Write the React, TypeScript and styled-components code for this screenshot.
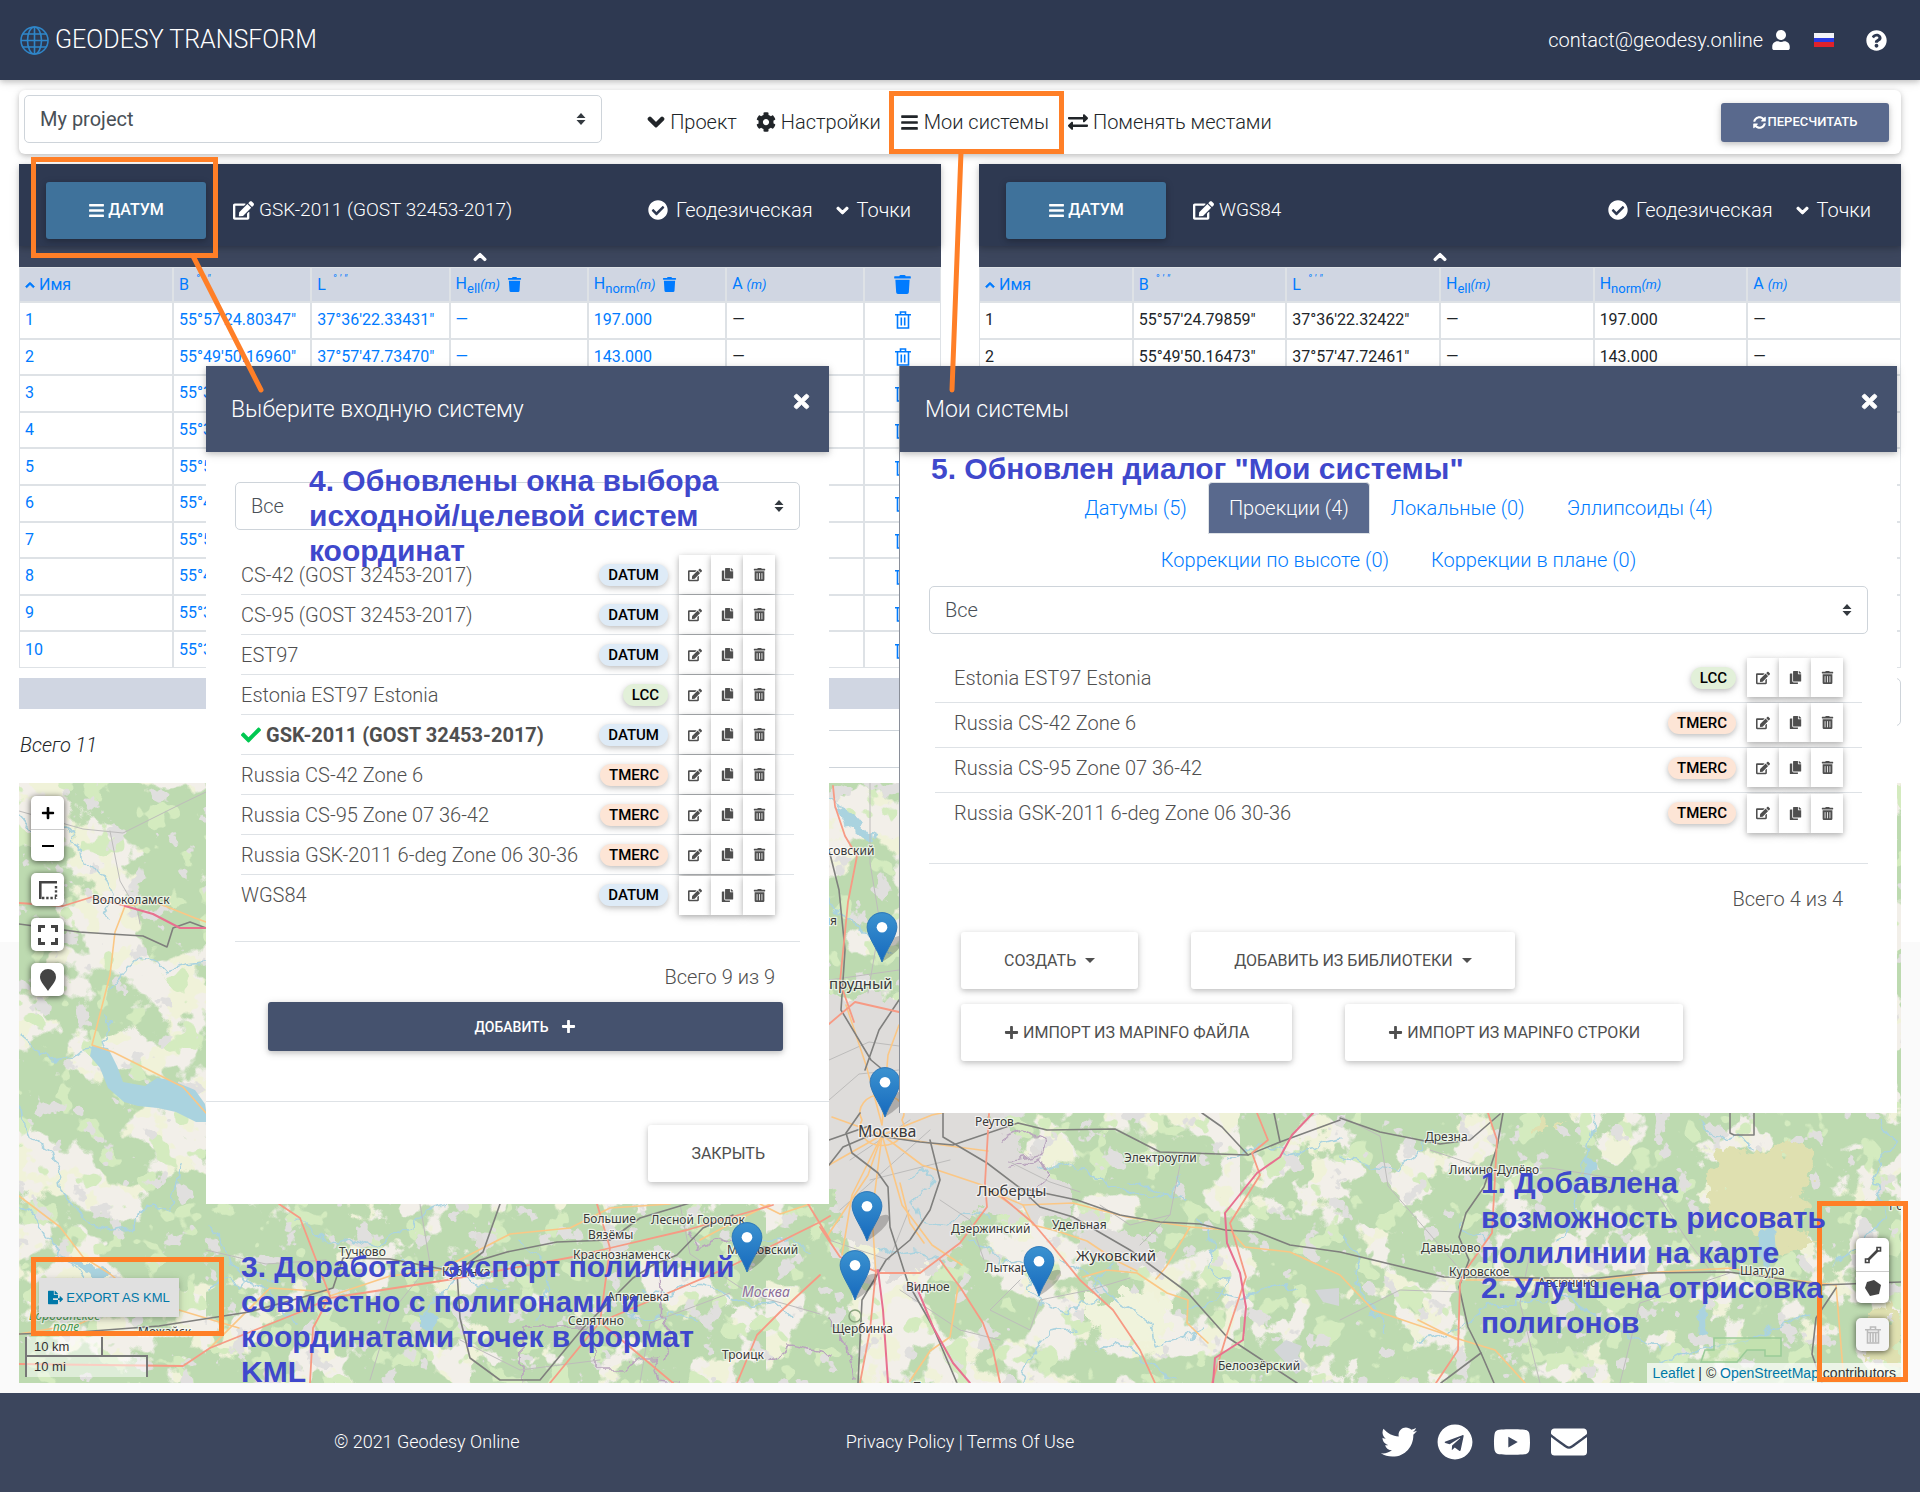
import React from "react";
import styled, { createGlobalStyle, css } from "styled-components";
import {
  FaBars,
  FaCheck,
  FaCheckCircle,
  FaChevronDown,
  FaCog,
  FaCopy,
  FaEdit,
  FaEnvelope,
  FaExchangeAlt,
  FaFileExport,
  FaPlus,
  FaQuestionCircle,
  FaSyncAlt,
  FaTelegram,
  FaTimes,
  FaTrash,
  FaTrashAlt,
  FaTwitter,
  FaUser,
  FaYoutube,
} from "react-icons/fa";

const color = {
  navy: "#2e3951",
  slate: "#3c465d",
  modal: "#45526e",
  accent: "#59698d",
  datum: "#3f729b",
  link: "#007bff",
  tableHead: "#d0d6e2",
  line: "#dee2e6",
  note: "#3f48cc",
  frame: "#ff7f27",
};

const shadow = "0 2px 5px rgba(0, 0, 0, 0.16), 0 2px 10px rgba(0, 0, 0, 0.12)";

const GlobalStyle = createGlobalStyle`
  * { box-sizing: border-box; }
  body {
    margin: 0;
    background: #fff;
    color: #212529;
    font: 400 20px/30px Roboto, "Open Sans", sans-serif;
  }
  button, input, select { font: inherit; color: inherit; }
  button { cursor: pointer; border: 0; padding: 0; background: none; }
  svg { flex: none; display: block; }
  a { text-decoration: none; color: inherit; }
  h1, h2, p, ul { margin: 0; padding: 0; font-weight: inherit; }
`;

const Page = styled.div`
  position: relative;
  background: linear-gradient(#fff 942px, #fafafa 942px);
`;

/* ---------- Top bar ---------- */

const TopBar = styled.header`
  display: flex;
  align-items: center;
  justify-content: space-between;
  height: 80px;
  padding: 0 33px 0 20px;
  background: ${color.navy};
  color: #fff;
  font-weight: 300;
  box-shadow: ${shadow};
`;

const Brand = styled.a`
  display: flex;
  align-items: center;
  gap: 6px;

  h1 {
    font-size: 25px;
  }
`;

const Account = styled.nav`
  display: flex;
  align-items: center;

  a {
    display: flex;
    align-items: center;
    gap: 8px;
  }
  button {
    display: flex;
    margin-left: 23px;
  }
  button:last-child {
    margin-left: 32px;
  }
`;

const Flag = styled.span`
  width: 20px;
  height: 14px;
  background: linear-gradient(#f4f4f8 33%, #2b3be0 33% 62%, #e0222a 62%);
`;

const Main = styled.main`
  padding: 10px 19px;
`;

/* ---------- Toolbar ---------- */

const Toolbar = styled.section`
  display: flex;
  align-items: center;
  height: 64px;
  padding: 0 12px 0 5px;
  border-radius: 6px;
  background: #fff;
  box-shadow: ${shadow};
`;

const SelectBox = styled.label`
  display: grid;
  align-items: center;
  width: 100%;
  height: 48px;

  select,
  svg {
    grid-area: 1 / 1;
  }
  select {
    appearance: none;
    width: 100%;
    height: 100%;
    padding: 0 36px 0 15px;
    border: 1px solid #ced4da;
    border-radius: 5px;
    background: #fff;
    color: #495057;
  }
  svg {
    justify-self: end;
    margin-right: 16px;
    pointer-events: none;
  }
`;

const ToolbarSelect = styled.div`
  align-self: flex-start;
  width: 31%;
  padding-top: 5px;
`;

const Menu = styled.nav`
  display: flex;
  flex: 1;
  gap: 19px;
  margin-left: 45px;

  button {
    display: flex;
    align-items: center;
    gap: 5px;
    font-weight: 300;
  }
`;

const RecalcButton = styled.button`
  display: flex;
  align-items: center;
  justify-content: center;
  gap: 2px;
  width: 168px;
  height: 39px;
  border-radius: 3px;
  background: ${color.accent};
  color: #fff;
  font-size: 13px;
  font-weight: 500;
  box-shadow: ${shadow};
`;

/* ---------- Coordinate panels ---------- */

const Panels = styled.div`
  display: grid;
  grid-template-columns: 1fr 1fr;
  gap: 38px;
  margin-top: 10px;
`;

const Panel = styled.section`
  display: flex;
  flex-direction: column;
`;

const PanelHead = styled.header`
  position: relative;
  display: flex;
  align-items: center;
  height: 82px;
  padding: 10px 30px 0 27px;
  background: ${color.navy};
  color: #fff;
  box-shadow: ${shadow};
`;

const DatumButton = styled.button`
  display: flex;
  align-items: center;
  justify-content: center;
  gap: 3px;
  width: 160px;
  height: 57px;
  border-radius: 3px;
  background: ${color.datum};
  color: #fff;
  font-size: 16px;
  font-weight: 500;
  box-shadow: ${shadow};
`;

const SystemName = styled.button`
  display: flex;
  flex: 1;
  align-items: center;
  gap: 5px;
  margin-left: 27px;
  color: #fff;
  font-size: 19px;
  font-weight: 300;
`;

const ModeButton = styled.button`
  display: flex;
  align-items: center;
  gap: 8px;
  margin-left: 23px;
  color: #fff;
  font-weight: 300;
`;

const Collapse = styled.button`
  display: flex;
  align-items: center;
  justify-content: center;
  height: 21px;
  background: ${color.slate};
  color: #fff;
`;

const Chevron = styled(FaChevronDown)<{ $up?: boolean }>`
  stroke: currentColor;
  stroke-width: 44;
  ${(p) => p.$up && "transform: rotate(180deg);"}
`;

const Table = styled.table<{ $input?: boolean }>`
  width: 100%;
  height: 401px;
  border-collapse: separate;
  border-spacing: 0;
  table-layout: fixed;
  font-size: 16px;
  line-height: 24px;
  background: #fff;
  color: ${(p) => (p.$input ? color.link : "#212529")};

  th,
  td {
    overflow: hidden;
    padding: 0 5px;
    border: 1px solid ${color.line};
    text-align: left;
    font-weight: 400;
    white-space: nowrap;
  }
  th {
    height: 35px;
    background: ${color.tableHead};
    color: ${color.link};
  }
  td.plain {
    color: #212529;
  }
  .bin svg {
    margin: 0 auto;
  }
  i {
    font-size: 13px;
  }
  sub {
    font-size: 13px;
    line-height: 0;
  }
`;

const HeadCell = styled.span`
  display: flex;
  align-items: center;
  gap: 4px;

  span + svg {
    margin-left: 3px;
  }
`;

const Degrees = styled.sup`
  align-self: flex-start;
  font-size: 11px;
  font-style: italic;
  line-height: 12px;
  white-space: pre;
`;

const Strip = styled.div`
  height: 31px;
  margin-top: 10px;
  background: ${color.tableHead};
`;

const PageSizeRow = styled.div`
  margin-top: 10px;
`;

const Summary = styled.div`
  display: grid;
  grid-template-columns: 1fr 1fr;
  align-items: start;
  margin-top: 21px;
  font-style: italic;
  font-weight: 300;

  span {
    padding-left: 1px;
  }
  input {
    width: 100%;
    height: 38px;
    border: 1px solid #ced4da;
    border-radius: 4px;
  }
`;

/* ---------- Map ---------- */

const MapBox = styled.section`
  position: relative;
  height: 600px;
  margin-top: 15px;
  overflow: hidden;
  background: #f2efe9;
  font: 14px/20px "Liberation Sans", sans-serif;

  > svg {
    width: 100%;
    height: 100%;
  }
`;

const ControlStack = styled.div<{ $side: "left" | "right" }>`
  position: absolute;
  display: flex;
  flex-direction: column;
  gap: ${(p) => (p.$side === "left" ? 12 : 15)}px;
  ${(p) =>
    p.$side === "left"
      ? css`
          top: 13px;
          left: 12px;
        `
      : css`
          right: 12px;
          bottom: 32px;
        `}
`;

const ControlBar = styled.div<{ $muted?: boolean }>`
  overflow: hidden;
  width: 33px;
  border-radius: 5px;
  background: ${(p) => (p.$muted ? "#f4f4f4" : "#fff")};
  color: ${(p) => (p.$muted ? "#bbb" : "#444")};
  box-shadow: 0 1px 6px rgba(0, 0, 0, 0.65);

  button {
    display: flex;
    align-items: center;
    justify-content: center;
    width: 33px;
    height: 33px;
  }
  button + button {
    height: 32px;
    border-top: 1px solid #ccc;
  }
`;

const ExportButton = styled.button`
  position: absolute;
  left: 20px;
  bottom: 66px;
  display: flex;
  align-items: center;
  justify-content: center;
  gap: 3px;
  width: 140px;
  height: 39px;
  background: #e0e0e0;
  color: #0078a8;
  font-size: 13px;
  box-shadow: ${shadow};
`;

const Scale = styled.div`
  position: absolute;
  left: 6px;
  bottom: 6px;
  color: #333;
  font-size: 13px;
  line-height: 20px;

  div {
    height: 20px;
    padding-left: 7px;
    border: 2px solid #777;
    border-top: 0;
    background: rgba(255, 255, 255, 0.5);
  }
  div:first-child {
    width: 78px;
  }
  div:last-child {
    width: 123px;
    height: 22px;
    margin-top: -2px;
    border-top: 2px solid #777;
    border-bottom: 0;
  }
`;

const Attribution = styled.div`
  position: absolute;
  right: 0;
  bottom: 0;
  padding: 0 5px;
  background: rgba(255, 255, 255, 0.7);
  color: #333;

  a {
    color: #0078a8;
  }
`;

/* ---------- Dialogs ---------- */

const Dialog = styled.section<{ $left: number; $width: number; $edge?: boolean }>`
  position: absolute;
  top: 366px;
  left: ${(p) => p.$left}px;
  width: ${(p) => p.$width}px;
  ${(p) => p.$edge && "border-left: 1px solid #8a8f99;"}
  background: #fff;
  color: #4f4f4f;
  font-weight: 300;
`;

const DialogHead = styled.header`
  display: flex;
  justify-content: space-between;
  height: 86px;
  padding: 0 17px 0 25px;
  background: ${color.modal};
  color: #fff;
  box-shadow: ${shadow};

  h2 {
    font-size: 23px;
    line-height: 88px;
  }
  button {
    height: 70px;
  }
`;

const CloseIcon = styled(FaTimes)`
  stroke: currentColor;
  stroke-width: 24;
`;

const DialogBody = styled.div`
  padding: 30px 29px 0;
`;

const SystemList = styled.ul<{ $roomy?: boolean }>`
  margin: ${(p) => (p.$roomy ? "24px 6px 25px" : "25px 6px 26px")};
  list-style: none;

  li {
    display: flex;
    align-items: center;
    height: ${(p) => (p.$roomy ? 45 : 40)}px;
    padding: ${(p) => (p.$roomy ? "0 19px 5px" : "0 19px 0 0")};
    border-bottom: 1px solid ${color.line};
  }
  li:last-child {
    border-bottom: 0;
  }
`;

const SystemTitle = styled.span<{ $chosen?: boolean }>`
  display: flex;
  flex: 1;
  align-items: center;
  gap: 5px;
  font-weight: ${(p) => (p.$chosen ? 700 : 300)};

  svg {
    color: #00c851;
  }
`;

const kinds = { DATUM: "#deebf7", LCC: "#e2f0d9", TMERC: "#fde5d6" };
type Kind = keyof typeof kinds;

const Badge = styled.span<{ $kind: Kind }>`
  height: 22px;
  margin-right: 11px;
  padding: 0 9px;
  border-radius: 11px;
  background: ${(p) => kinds[p.$kind]};
  color: #000;
  font-size: 15px;
  font-weight: 500;
  line-height: 22px;
  box-shadow: ${shadow};
`;

const RowButton = styled.button`
  display: flex;
  align-items: center;
  justify-content: center;
  width: 32px;
  height: 39px;
  background: #fff;
  color: #4f4f4f;
  box-shadow: 0 2px 5px rgba(0, 0, 0, 0.2), 0 2px 10px rgba(0, 0, 0, 0.16);
`;

const Total = styled.p`
  padding: 20px 25px 0;
  border-top: 1px solid ${color.line};
  text-align: right;
`;

const AddButton = styled.button`
  display: flex;
  align-items: center;
  justify-content: center;
  gap: 13px;
  width: calc(100% - 50px);
  height: 49px;
  margin: 10px 17px 50px 33px;
  border-radius: 3px;
  background: ${color.modal};
  color: #fff;
  font-size: 14px;
  font-weight: 500;
  box-shadow: ${shadow};
`;

const LightButton = styled.button`
  display: flex;
  align-items: center;
  gap: 4px;
  height: 57px;
  padding: 0 43px;
  border-radius: 3px;
  background: #fff;
  color: #4f4f4f;
  font-size: 16px;
  font-weight: 400;
  box-shadow: ${shadow};
`;

const DialogFoot = styled.footer`
  display: flex;
  justify-content: flex-end;
  padding: 23px 21px 22px;
  border-top: 1px solid ${color.line};
`;

const Tabs = styled.nav`
  display: flex;
  flex-wrap: wrap;
  justify-content: center;
  padding: 0 130px;
`;

const Tab = styled.button<{ $active?: boolean }>`
  height: 52px;
  padding: 0 20px;
  border: 1px solid ${(p) => (p.$active ? color.line : "transparent")};
  border-radius: 4px 4px 0 0;
  background: ${(p) => (p.$active ? color.accent : "transparent")};
  color: ${(p) => (p.$active ? "#fff" : color.link)};
  font-weight: 300;
`;

const Actions = styled.div`
  display: flex;
  flex-wrap: wrap;
  gap: 15px 53px;
  padding: 18px 32px 52px;
`;

const Caret = styled.span`
  margin-left: 5px;
  border: 5px solid transparent;
  border-top-color: currentColor;
  border-bottom: 0;
`;

/* ---------- Footer ---------- */

const Footer = styled.footer`
  display: grid;
  grid-template-columns: 1fr 1fr 1fr;
  align-items: center;
  justify-items: center;
  height: 99px;
  padding: 0 160px 2px;
  background: ${color.slate};
  color: #fff;
  font-size: 18px;
  font-weight: 300;
`;

const Social = styled.div`
  display: flex;
  align-items: center;
  gap: 20px;
  padding-right: 18px;
`;

/* ---------- Annotations ---------- */

const Frame = styled.div<{ $x: number; $y: number; $w: number; $h: number }>`
  position: absolute;
  top: ${(p) => p.$y}px;
  left: ${(p) => p.$x}px;
  width: ${(p) => p.$w}px;
  height: ${(p) => p.$h}px;
  border: 5px solid ${color.frame};
  pointer-events: none;
`;

const Pointers = styled.svg`
  position: absolute;
  top: 0;
  left: 0;
  pointer-events: none;
`;

const Note = styled.p<{ $x: number; $y: number }>`
  position: absolute;
  top: ${(p) => p.$y}px;
  left: ${(p) => p.$x}px;
  color: ${color.note};
  font: 700 30px/35px "Liberation Sans", Arial, sans-serif;
  white-space: pre;
  pointer-events: none;
`;

/* ---------- Drawings ---------- */

const Globe = () => (
  <svg width="29" height="29" viewBox="0 0 29 29" fill="none" stroke="#2f86c9" strokeWidth="1.6">
    <circle cx="14.5" cy="14.5" r="13.5" />
    <ellipse cx="14.5" cy="14.5" rx="7" ry="13.5" />
    <path d="M14.5 1v27M1 14.5h27M3 8h23M3 21h23" />
  </svg>
);

const SortCaret = () => (
  <svg width="10" height="12" viewBox="0 0 10 12" fill="#343a40">
    <path d="M5 0l4.5 5h-9zM5 12l4.5-5h-9z" />
  </svg>
);

const RulerIcon = () => (
  <svg width="20" height="20" viewBox="0 0 20 20" fill="none" stroke="currentColor" strokeWidth="2.6">
    <path d="M2.3 19V2.3H19" />
    <path d="M18 6v13M4 18h14" strokeDasharray="2.4 1.8" strokeWidth="2.4" />
  </svg>
);

const FullscreenIcon = () => (
  <svg width="22" height="22" viewBox="0 0 22 22" fill="none" stroke="currentColor" strokeWidth="3">
    <path d="M2.5 8V2.5H8M14 2.5h5.5V8M19.5 14v5.5H14M8 19.5H2.5V14" />
  </svg>
);

const PinIcon = () => (
  <svg width="18" height="22" viewBox="0 0 18 22" fill="currentColor">
    <path d="M9 0a8 8 0 0 0-8 8c0 5 5 9 8 14 3-5 8-9 8-14a8 8 0 0 0-8-8z" />
  </svg>
);

const LineIcon = () => (
  <svg width="18" height="18" viewBox="0 0 18 18" fill="none" stroke="currentColor">
    <path d="M4 14L14 4" strokeWidth="2.6" />
    <path d="M1.5 13H5v3.5H1.5zM13 1.5h3.5V5H13z" strokeWidth="1.6" />
  </svg>
);

const PolygonIcon = () => (
  <svg width="16" height="16" viewBox="0 0 16 16" fill="currentColor">
    <path d="M9 0l7 5-2 9-9 2-5-8 2-6z" />
  </svg>
);

const BinIcon = ({ striped }: { striped?: boolean }) => (
  <svg width="16" height="18" viewBox="0 0 16 18" fill="none" stroke="currentColor" strokeWidth="1.6">
    <path d="M0 3.8h16M5.5 3.500V1h5v2.500M2.500 4v13h11V4" />
    <path d={striped ? "M2.500 6.500h11M5.300 6v10.500M8 6v10.500M10.700 6v10.500" : "M6.300 6.500v8M9.700 6.500v8"} />
  </svg>
);

/* Map geometry is written in the coordinates of the 1882 × 600 view that starts at 19, 783. */

const rivers = [
  "M19 815l10 12 6 14 12-4 6 10M63 826l10 6-4 10 12 8 2 14 14 6 10 12 4 16-8 10 6 12",
  "M19 1033l12 10 8 12 14 5 14-2 10-8 13-2 17 6",
  "M110 990l14-18 14-16 16 2 10 12 20-6 22-2M107 1052l-4-14 10-8-8-14",
  "M19 1099l4 20 7 19 23 15 5 18 2 18 18 22 12 13 18 6 22-3 13-19 12-2 15 6 4-20 6-31",
  "M19 1206l16 10 12 20 14 20 16 14 14 22 30 18",
  "M206 1226l14 12 10 24 16 18 20 8 12 20 18 14M206 1290l20-10 16 8 14-14 20 6",
  "M300 1218l14 14 22 12 20-6 24 8 14-14 20-6 14-16 20-6M400 1262l24 10 30-6 24 20 30 4",
  "M420 1320l14-20 12-8 10-20 30 6 16-16 24 4",
  "M640 1290l30 6 20-14 30 8 26 16 28-4 20 18M620 1310l30 10 18-8 30 8",
  "M829 900l10 16 20 8 14 20 20 8M829 800l14 8 8 16 26 14",
  "M910 1180l14-10 8 14-20 16 10 22 24 4 14-12 30 2M880 1245l14 10 20-4 30 10",
  "M970 1240l20 8 12 18 18-6 14 14-6 16 20 16 20 8 14-10 18-4-8-18 24-20",
  "M1040 1170l26-6 20 6 26 16 24 10 30-2 20 6M1060 1260l30 14 18 20 24 16 20 14 4 22 20-6 28-12",
  "M1200 1220l14 26-6 22 20 14-12 20-30 6M1130 1180l40 16 10-20",
  "M1100 1350l20-8 26 20 30 20M1020 1383l12-30 18-20 28-4",
  "M1215 1290l30 8 30-14 20 6M1230 1160l30-16 30 10 50-14",
  "M1340 1156l30 10 26 4 24-18 12-22M1340 1235l20 20-6 24 18 30 14 24",
  "M1460 1225l26 16 10-20 30-8M1596 1114l-8 36-16 40 8 22-20 30M1420 1340l40-10 26-24 60-6",
  "M1660 1363l40-14 44-4 30-18 34-12M1880 1120l14 22-20 36 12 40-30 32-22 12M1560 1290l40 30 60 30",
  "M1700 1120l18 20 20-6 16 18M520 1240l20 20 10 30-14 30M740 1230l20 12 30-4 20 16",
];

const reservoir =
  "M92 1046l16 2 9 18 6 16 22 4 12-8 14 2 24 10 10 14 3 18-12 0-20-10-18-4-20-2-14-4-16-14-8-20-10-12z";

const lakes = [
  "M1760 1230l14-4 2 28-8 10-12-8z",
  "M1698 1308l8-6 2 30-8 2zM1586 1156l8 4-4 20-8-4z",
  "M835 806l20 10 18 24-10-2-20-16z",
  "M418 1312l18 6-4 14-14-6z",
  "M60 1252l30 12 20 8-6 8-30-14z",
];

const minorRoads = [
  "M19 811l64 18 40 4 60-30 23-11M110 831l10 50 18 31 2 12",
  "M829 1060l40-18 30 4M829 1100l30-26 40-4M829 980l70-10M870 783v80l10 60-12 70",
  "M1340 1116l40 20 8 50 40 46 34 40M1340 1320l60-30 60 2M1430 1150l60 20 60-2 100 16 40 60 20 26",
  "M1020 1280l-30 30 40 20 10-30 50-10 40-12M1080 1192l-30-10-40-20M1180 1165l-10 50-30 30",
  "M1100 1205l30 20 40-10M940 1200l30 20 14 40M900 1290l60 40 40 10M1540 1383l-20-80 10-50",
  "M206 1250l60 14 60-4M420 1204l10 60-40 50-20 66M460 1340l60 30 80-10M1620 1383l20-80 90-30",
  "M680 1204l10 50 60 40 70 20M640 1383l10-60 80-30",
  "M829 1240l60 20 20-50M850 1160l60-40M870 1180l80-20M840 1210l90-80",
];

const orangeRoads = [
  "M125 906l-10 26-5 43-18 70 21 7 40 20 30 15 23 26",
  "M125 906l30-4 40 16 11 4",
  "M19 1196l41 31 23 30 27 17 20 16 24 14M19 1334l60-10 60-26 100 30",
  "M330 1296l60-20 50-6 70-36 60-6 40-20 60-4M210 1348l60-60 60 4",
  "M760 1204l20 10 30-10M700 1240l30-16 40-20",
  "M882 1135l-53 30M882 1135l-30 60-10 60M882 1135l-10 80 4 60M882 1135l20 70 30 40 30 20M882 1135l40 30 60 20 30 20",
  "M882 1135l60 10 46 6M882 1135l50-20 57-12M882 1135l-50-18M882 1135l-14 40-40 60M882 1125l-16-60-20-60M882 1125l6-70 11-30",
  "M862 1120a22 18 0 1 0 40 0a22 18 0 1 0-40 0",
  "M988 1190l35 15 50-2 54 14 63 10 40 3 15 17 45 5 50 23 33 35 89 30 33 10 30 33",
  "M1023 1205l10 20 24 6 30 10 30 20 20 10",
  "M1083 1277l24-7 30 3 30 20 21 7-1 23 21 20M1190 1227l-24 40-10 12",
  "M900 1183l10 40 14 20M958 1287l-8 50-20 14-20 30",
  "M1466 1280h133l60-8 73-4 41 10 63 7 7 85M1458 1340l-40-20",
];

const redRoads = [
  "M19 903l44 3 29-9 33 9",
  "M19 1364l164 2 27-18 90-36 30-14 117-18 126-23 37-9 77-18 86-25",
  "M279 1204l21 14 30 78-17 32-3 55M597 1204l13 44-10 74-50 61M600 1322l73 61M600 1322l127-54 93-46 10-6",
  "M808 1204l22 36M820 1275l-40 37-23 23-20 48",
  "M833 786l2 20 10 30 12 20-9 46-8 80 14 40M829 1024l26-22 44 10",
  "M820 1227l20 30 40 16h40l40-30 27-36-2-24 4-69",
  "M940 1260l20 27 23 36 10 27 7 33",
  "M1002 1197l31 26 17 20 30 37 33 30 27 40 15 33",
  "M1257 1113l11 27-16 13 8 22-30 48 16 54-20 60-14 46",
  "M1488 1113l9 27-2 37-3 56-24 34-8 16-2 67-22 33",
  "M876 1270l-6 60-10 53",
];

const pinkRoads = [
  "M125 906l28 8 27 14h26",
  "M1313 1113l-21 22-12 22-23 16-32 40 2 30 13 30 6 34-3 33-28 18-2 25",
  "M878 1270l5 40 5 73M915 1283l18 44 20 36 17 20",
];

const rails = [
  "M19 924l60 8 31 2 33 2 24 11 6-19 17-6 16 6",
  "M19 1334l60-2 80-6 90-14 51-14 33-10 10-30 47 1 57 11 60-18 50-10 53-2 30-22 50-15",
  "M500 1204l-17 48-26 20 3 46 10 40 30 22h40l43-52 50-50 20-13 24-10 26-27 30-13",
  "M829 850l10 40 6 60-4 60 30 50 24 20M899 1000l-20 30-14 40M829 1140l40-14",
  "M829 1165l14-18 28-12 49 7 33 3 65-22 29 7 68-1 45 23 88 3 32-13 60-22",
  "M860 1113l-14 20 6 20 26 20 10 14 2 40 18 56 25 44 24 56",
  "M943 1113v24l44 26 33 25 20 19 33 10 57 33 57 42 40 45 70 46",
  "M930 1140l10 40-10 30-20 30-24 20-24 40-4 83",
  "M1020 1188l57 12 43 15 40 7 40 2 25 6 32 2 33 13 50 7 104 25 96 1h59l48-5 81-1 41 5 52 8 80-3",
  "M1503 1113l-6 34-13 40-18 26-7 24 10 23-10 27 9 40 13 26 13 30M1340 1118l40 14 60 12 30-4 30-26",
  "M1481 1353l-40 30M1202 1113l20 14 26 28M1274 1113l6 29",
  "M1730 1113v20l4 2h20v-22M1836 1288l-20 30-4 36 10 29",
];

const borders = [
  "M522 1383v-56h60l10-2M594 1350v20h30l10-10h20l6 20 20 3M658 1260l4 60 8 20-6 20",
  "M1000 1140l20-10 24 10-6 16-30 6M1010 1170l30-10 10 16-24 20M829 1320l16 20 10 40",
  "M687 1230l10 20 20-10 20 6M770 1360l20-14 40 8",
];

const labels: [string, number, number, number?][] = [
  ["Волоколамск", 92, 904],
  ["Реутов", 975, 1126],
  ["Москва", 858, 1137, 16],
  ["Электроугли", 1124, 1162],
  ["Люберцы", 977, 1196, 15],
  ["Дзержинский", 951, 1233],
  ["Удельная", 1052, 1229],
  ["Жуковский", 1076, 1261, 15],
  ["Лыткарино", 985, 1272],
  ["Видное", 906, 1291],
  ["Щербинка", 832, 1333],
  ["Домодедово", 911, 1392, 15],
  ["Белоозёрский", 1218, 1370],
  ["Дрезна", 1425, 1141],
  ["Ликино-Дулёво", 1449, 1174],
  ["Давыдово", 1421, 1252],
  ["Куровское", 1449, 1276],
  ["Авсюнино", 1538, 1287],
  ["Шатура", 1740, 1275],
  ["Рошаль", 1889, 1210],
  ["Тучково", 339, 1256],
  ["Кубинка", 442, 1276],
  ["Большие", 583, 1223],
  ["Вязёмы", 588, 1239],
  ["Лесной Городок", 651, 1224],
  ["Краснознаменск", 573, 1259],
  ["Московский", 727, 1254],
  ["Апрелевка", 607, 1301],
  ["Селятино", 568, 1325],
  ["Троицк", 722, 1359],
  ["Можайск", 138, 1336],
  ["Лосовский", 812, 855],
  ["Долгопрудный", 785, 989, 15],
  ["Лобня", 800, 925],
];

const markers = [
  [882, 962],
  [885, 1117],
  [867, 1241],
  [747, 1272],
  [855, 1300],
  [1039, 1296],
];

const Roads = ({ paths, stroke, width }: { paths: string[]; stroke: string; width: number }) => (
  <g fill="none" stroke={stroke} strokeWidth={width} strokeLinejoin="round" strokeLinecap="round">
    {paths.map((d) => (
      <path key={d} d={d} />
    ))}
  </g>
);

const MapView = () => (
  <svg viewBox="19 783 1882 600" preserveAspectRatio="xMidYMid slice" role="img" aria-label="Карта">
    <defs>
      <filter id="forest" x="0" y="0" width="1" height="1" colorInterpolationFilters="sRGB">
        <feTurbulence type="fractalNoise" baseFrequency="0.014" numOctaves="5" seed="11" />
        <feColorMatrix values="0 0 0 0 .741  0 0 0 0 .855  0 0 0 0 .69  28 0 0 0 -12.9" />
      </filter>
      <filter id="woods" x="0" y="0" width="1" height="1" colorInterpolationFilters="sRGB">
        <feTurbulence type="fractalNoise" baseFrequency="0.02" numOctaves="5" seed="51" />
        <feColorMatrix values="0 0 0 0 .741  0 0 0 0 .855  0 0 0 0 .69  28 0 0 0 -13.6" />
      </filter>
      <filter id="meadow" x="0" y="0" width="1" height="1" colorInterpolationFilters="sRGB">
        <feTurbulence type="fractalNoise" baseFrequency="0.03" numOctaves="4" seed="4" />
        <feColorMatrix values="0 0 0 0 .94  0 0 0 0 .95  0 0 0 0 .85  26 0 0 0 -14" />
      </filter>
      <filter id="grass" x="0" y="0" width="1" height="1" colorInterpolationFilters="sRGB">
        <feTurbulence type="fractalNoise" baseFrequency="0.035" numOctaves="3" seed="23" />
        <feColorMatrix values="0 0 0 0 .83  0 0 0 0 .92  0 0 0 0 .75  30 0 0 0 -19.3" />
      </filter>
      <filter id="town" x="0" y="0" width="1" height="1" colorInterpolationFilters="sRGB">
        <feTurbulence type="fractalNoise" baseFrequency="0.04" numOctaves="4" seed="37" />
        <feColorMatrix values="0 0 0 0 .88  0 0 0 0 .875  0 0 0 0 .87  30 0 0 0 -20" />
      </filter>
      <filter id="rough" x="-.2" y="-.2" width="1.4" height="1.4">
        <feTurbulence type="fractalNoise" baseFrequency="0.05" numOctaves="4" seed="8" />
        <feDisplacementMap in="SourceGraphic" scale="40" xChannelSelector="R" yChannelSelector="G" />
      </filter>
      <filter id="meander" x="-.05" y="-.05" width="1.1" height="1.1">
        <feTurbulence type="fractalNoise" baseFrequency="0.08" numOctaves="2" seed="2" />
        <feDisplacementMap in="SourceGraphic" scale="14" xChannelSelector="R" yChannelSelector="G" />
      </filter>
      <linearGradient id="pin" x1="0" y1="0" x2="0" y2="1">
        <stop offset="0" stopColor="#3b92d0" />
        <stop offset="1" stopColor="#1669bd" />
      </linearGradient>
    </defs>
    <rect x="19" y="783" width="1882" height="600" fill="#f2efe9" />
    <rect x="19" y="783" width="1882" height="600" filter="url(#meadow)" />
    <rect x="19" y="783" width="1882" height="600" filter="url(#forest)" />
    <rect x="1240" y="783" width="661" height="600" filter="url(#woods)" />
    <rect x="206" y="1150" width="560" height="233" filter="url(#woods)" />
    <rect x="19" y="783" width="1882" height="600" filter="url(#grass)" />
    <rect x="19" y="783" width="1882" height="600" filter="url(#town)" />
    <g filter="url(#rough)">
      <path d="M810 1000l80-10 40 60 60 60 60 60 30 40-50 10-60-10-20 50-60 20-40-40-30-60z" fill="#dedcda" />
      <path d="M1070 1215l60 10 40 40-20 10-60-20z" fill="#dedcda" />
      <path d="M1090 1300l60-10 20 20-10 40-40-10-30-20z" fill="#f0f3dc" />
      <path d="M1715 1150l50 4 40-10 10 30-20 40 20 30-40 10-30-30-26 10-10-40z" fill="#dfe0b0" />
      <path d="M1530 1124l18-4 10 10-16 8z" fill="#dfe0b0" />
      <path d="M1860 1350l30-50 11 20v50z" fill="#dfe0b0" />
      <path d="M475 1230l20 10-6 16-20-8zM600 1240l24-6 6 16-20 6z" fill="#dedcda" />
    </g>
    <path d="M1274 1350l12-10 16 6-4 10 10 10-12 8zM1315 1290l24-2v18l-16-4z" fill="#d3d6d8" />
    <path d={reservoir} fill="#aad3df" />
    <g filter="url(#meander)">
      <Roads paths={rivers} stroke="#aad3df" width={1.6} />
      <g fill="#aad3df">
        {lakes.map((d) => (
          <path key={d} d={d} />
        ))}
      </g>
      <Roads paths={borders} stroke="#b9a4bd" width={1.6} />
    </g>
    <path
      d="M1714 1338h67v18h-16v-6h-18l-10 12h-36l4-12h9z"
      fill="#cdebb0"
      fillOpacity=".4"
      stroke="#9acb98"
      strokeWidth="1.5"
    />
    <Roads paths={minorRoads} stroke="#bdbcbb" width={1} />
    <Roads paths={orangeRoads} stroke="#fbc785" width={1.6} />
    <Roads paths={rails} stroke="#7f7f7d" width={1.6} />
    <Roads paths={redRoads} stroke="#f79a84" width={1.8} />
    <Roads paths={pinkRoads} stroke="#e8708f" width={2} />
    <circle cx="855" cy="1316" r="6" fill="none" stroke="#8aa37f" strokeWidth="1.5" />
    <g
      fontFamily="'Noto Sans', sans-serif"
      fontSize="12"
      fill="#3a3a3a"
      stroke="#fff"
      strokeOpacity=".65"
      strokeWidth="2.5"
      strokeLinejoin="round"
      paintOrder="stroke"
    >
      {labels.map(([text, x, y, size]) => (
        <text key={text + x} x={x} y={y} fontSize={size ?? 12}>
          {text}
        </text>
      ))}
      <text x="742" y="1297" fontSize="14" fontStyle="italic" fill="#8d6f9c">
        Москва
      </text>
      <text x="29" y="1320" fontStyle="italic" fill="#4a9b51">
        Бородинское
      </text>
      <text x="53" y="1331" fontStyle="italic" fill="#4a9b51">
        поле
      </text>
    </g>
    {markers.map(([x, y]) => (
      <g key={`${x}-${y}`} transform={`translate(${x - 15.5} ${y - 50}) scale(1.24 1.22)`}>
        <path d="M12.5 41L20 22q12-6 10 2-3 8-17.5 17" fill="#000" fillOpacity=".22" />
        <path
          d="M12.5.5C5.9.5.5 5.9.5 12.5c0 7.5 8.5 18 12 28.5 3.5-10.5 12-21 12-28.5C24.5 5.9 19.1.5 12.5.5z"
          fill="url(#pin)"
          stroke="#2a75b8"
          strokeWidth=".8"
        />
        <circle cx="12.5" cy="12.5" r="4.3" fill="#fff" />
      </g>
    ))}
  </svg>
);

/* ---------- Data ---------- */

type Point = { b: string; l: string; h: string };

const inputPoints: Point[] = [
  { b: "55°57'24.80347\"", l: "37°36'22.33431\"", h: "197.000" },
  { b: "55°49'50.16960\"", l: "37°57'47.73470\"", h: "143.000" },
  ...["55°3", "55°3", "55°5", "55°4", "55°5", "55°4", "55°3", "55°3"].map((b) => ({ b, l: "", h: "" })),
];

const outputPoints: Point[] = [
  { b: "55°57'24.79859\"", l: "37°36'22.32422\"", h: "197.000" },
  { b: "55°49'50.16473\"", l: "37°57'47.72461\"", h: "143.000" },
  ...Array.from({ length: 8 }, () => ({ b: "", l: "", h: "" })),
];

type System = { name: string; kind: Kind; chosen?: boolean };

const allSystems: System[] = [
  { name: "CS-42 (GOST 32453-2017)", kind: "DATUM" },
  { name: "CS-95 (GOST 32453-2017)", kind: "DATUM" },
  { name: "EST97", kind: "DATUM" },
  { name: "Estonia EST97 Estonia", kind: "LCC" },
  { name: "GSK-2011 (GOST 32453-2017)", kind: "DATUM", chosen: true },
  { name: "Russia CS-42 Zone 6", kind: "TMERC" },
  { name: "Russia CS-95 Zone 07 36-42", kind: "TMERC" },
  { name: "Russia GSK-2011 6-deg Zone 06 30-36", kind: "TMERC" },
  { name: "WGS84", kind: "DATUM" },
];

const projections = allSystems.filter((s) => s.kind !== "DATUM");

/* ---------- Parts ---------- */

const Select = ({ label, value }: { label: string; value: string }) => (
  <SelectBox>
    <select aria-label={label} defaultValue={value}>
      <option>{value}</option>
    </select>
    <SortCaret />
  </SelectBox>
);

const Systems = ({ items, roomy }: { items: System[]; roomy?: boolean }) => (
  <SystemList $roomy={roomy}>
    {items.map((s) => (
      <li key={s.name}>
        <SystemTitle $chosen={s.chosen}>
          {s.chosen && <FaCheck size={20} />}
          {s.name}
        </SystemTitle>
        <Badge $kind={s.kind}>{s.kind}</Badge>
        <RowButton aria-label="Изменить">
          <FaEdit size={14} />
        </RowButton>
        <RowButton aria-label="Копировать">
          <FaCopy size={13} />
        </RowButton>
        <RowButton aria-label="Удалить">
          <FaTrashAlt size={13} />
        </RowButton>
      </li>
    ))}
  </SystemList>
);

const CoordinatePanel = ({ name, points, input }: { name: string; points: Point[]; input?: boolean }) => (
  <Panel>
    <PanelHead>
      <DatumButton>
        <FaBars size={17} /> ДАТУМ
      </DatumButton>
      <SystemName>
        <FaEdit size={21} /> {name}
      </SystemName>
      <ModeButton>
        <FaCheckCircle size={20} /> Геодезическая
      </ModeButton>
      <ModeButton>
        <Chevron size={13} /> Точки
      </ModeButton>
    </PanelHead>
    <Collapse aria-label="Свернуть">
      <Chevron $up size={14} />
    </Collapse>
    <Table $input={input}>
      <colgroup>
        {input ? (
          <>
            <col style={{ width: "16.7%" }} />
            <col span={5} style={{ width: "15%" }} />
            <col />
          </>
        ) : (
          <col span={6} />
        )}
      </colgroup>
      <thead>
        <tr>
          <th>
            <HeadCell>
              <Chevron $up size={10} /> Имя
            </HeadCell>
          </th>
          {["B", "L"].map((axis) => (
            <th key={axis}>
              <HeadCell>
                {axis} <Degrees> ° ' "</Degrees>
              </HeadCell>
            </th>
          ))}
          {["ell", "norm"].map((kind) => (
            <th key={kind}>
              <HeadCell>
                <span>
                  H<sub>{kind}</sub>
                  <i>(m)</i>
                </span>
                {input && <FaTrash size={15} />}
              </HeadCell>
            </th>
          ))}
          <th>
            A <i>(m)</i>
          </th>
          {input && (
            <th className="bin">
              <FaTrash size={19} />
            </th>
          )}
        </tr>
      </thead>
      <tbody>
        {points.map((p, i) => (
          <tr key={i}>
            <td>{i + 1}</td>
            <td>{p.b}</td>
            <td>{p.l}</td>
            <td>—</td>
            <td>{p.h}</td>
            <td className="plain">—</td>
            {input && (
              <td className="bin">
                <BinIcon />
              </td>
            )}
          </tr>
        ))}
      </tbody>
    </Table>
    {input ? (
      <>
        <Strip />
        <Summary>
          <span>Всего 11</span>
          <input aria-label="Страница" />
        </Summary>
      </>
    ) : (
      <PageSizeRow>
        <Select label="Строк на странице" value="10" />
      </PageSizeRow>
    )}
  </Panel>
);

export default function App() {
  return (
    <Page>
      <GlobalStyle />
      <TopBar>
        <Brand href="#">
          <Globe /> <h1>GEODESY TRANSFORM</h1>
        </Brand>
        <Account>
          <a href="#account">
            contact@geodesy.online <FaUser size={20} />
          </a>
          <button aria-label="Русский">
            <Flag />
          </button>
          <button aria-label="Справка">
            <FaQuestionCircle size={21} />
          </button>
        </Account>
      </TopBar>

      <Main>
        <Toolbar>
          <ToolbarSelect>
            <Select label="Проект" value="My project" />
          </ToolbarSelect>
          <Menu>
            <button>
              <Chevron size={18} /> Проект
            </button>
            <button>
              <FaCog size={20} /> Настройки
            </button>
            <button>
              <FaBars size={19} /> Мои системы
            </button>
            <button>
              <FaExchangeAlt size={20} /> Поменять местами
            </button>
          </Menu>
          <RecalcButton>
            <FaSyncAlt size={13} /> ПЕРЕСЧИТАТЬ
          </RecalcButton>
        </Toolbar>

        <Panels>
          <CoordinatePanel name="GSK-2011 (GOST 32453-2017)" points={inputPoints} input />
          <CoordinatePanel name="WGS84" points={outputPoints} />
        </Panels>

        <MapBox>
          <MapView />
          <ControlStack $side="left">
            <ControlBar>
              <button aria-label="Приблизить">
                <FaPlus size={14} color="#000" />
              </button>
              <button aria-label="Отдалить">
                <svg width="12" height="2">
                  <path d="M0 1h12" stroke="#000" strokeWidth="2" />
                </svg>
              </button>
            </ControlBar>
            <ControlBar>
              <button aria-label="Измерить">
                <RulerIcon />
              </button>
            </ControlBar>
            <ControlBar>
              <button aria-label="На весь экран">
                <FullscreenIcon />
              </button>
            </ControlBar>
            <ControlBar>
              <button aria-label="Поставить точку">
                <PinIcon />
              </button>
            </ControlBar>
          </ControlStack>
          <ExportButton>
            <FaFileExport size={15} /> EXPORT AS KML
          </ExportButton>
          <Scale>
            <div>10 km</div>
            <div>10 mi</div>
          </Scale>
          <ControlStack $side="right">
            <ControlBar>
              <button aria-label="Полилиния">
                <LineIcon />
              </button>
              <button aria-label="Полигон">
                <PolygonIcon />
              </button>
            </ControlBar>
            <ControlBar $muted>
              <button aria-label="Удалить фигуры">
                <BinIcon striped />
              </button>
            </ControlBar>
          </ControlStack>
          <Attribution>
            <a href="#leaflet">Leaflet</a> | © <a href="#osm">OpenStreetMap</a> contributors
          </Attribution>
        </MapBox>
      </Main>

      <Footer>
        <span>© 2021 Geodesy Online</span>
        <span>
          <a href="#privacy">Privacy Policy</a> | <a href="#terms">Terms Of Use</a>
        </span>
        <Social>
          <a href="#twitter" aria-label="Twitter">
            <FaTwitter size={36} />
          </a>
          <a href="#telegram" aria-label="Telegram">
            <FaTelegram size={36} />
          </a>
          <a href="#youtube" aria-label="YouTube">
            <FaYoutube size={38} />
          </a>
          <a href="#mail" aria-label="E-mail">
            <FaEnvelope size={36} />
          </a>
        </Social>
      </Footer>

      <Dialog $left={206} $width={623} aria-label="Выберите входную систему">
        <DialogHead>
          <h2>Выберите входную систему</h2>
          <button aria-label="Закрыть">
            <CloseIcon size={21} />
          </button>
        </DialogHead>
        <DialogBody>
          <Select label="Тип системы" value="Все" />
          <Systems items={allSystems} />
          <Total>Всего 9 из 9</Total>
          <AddButton>
            ДОБАВИТЬ <FaPlus size={15} />
          </AddButton>
        </DialogBody>
        <DialogFoot>
          <LightButton>ЗАКРЫТЬ</LightButton>
        </DialogFoot>
      </Dialog>

      <Dialog $left={899} $width={998} $edge aria-label="Мои системы">
        <DialogHead>
          <h2>Мои системы</h2>
          <button aria-label="Закрыть">
            <CloseIcon size={21} />
          </button>
        </DialogHead>
        <DialogBody>
          <Tabs>
            <Tab>Датумы (5)</Tab>
            <Tab $active>Проекции (4)</Tab>
            <Tab>Локальные (0)</Tab>
            <Tab>Эллипсоиды (4)</Tab>
            <Tab>Коррекции по высоте (0)</Tab>
            <Tab>Коррекции в плане (0)</Tab>
          </Tabs>
          <Select label="Тип проекции" value="Все" />
          <Systems items={projections} roomy />
          <Total>Всего 4 из 4</Total>
          <Actions>
            <LightButton>
              СОЗДАТЬ <Caret />
            </LightButton>
            <LightButton>
              ДОБАВИТЬ ИЗ БИБЛИОТЕКИ <Caret />
            </LightButton>
            <LightButton>
              <FaPlus size={15} /> ИМПОРТ ИЗ MAPINFO ФАЙЛА
            </LightButton>
            <LightButton>
              <FaPlus size={15} /> ИМПОРТ ИЗ MAPINFO СТРОКИ
            </LightButton>
          </Actions>
        </DialogBody>
      </Dialog>

      <Frame $x={31} $y={157} $w={187} $h={101} />
      <Frame $x={889} $y={91} $w={175} $h={63} />
      <Frame $x={31} $y={1257} $w={193} $h={79} />
      <Frame $x={1817} $y={1201} $w={91} $h={181} />
      <Pointers width="1100" height="400" stroke={color.frame} strokeWidth="5" strokeLinecap="round">
        <path d="M193 256L261 390M961 152L952 390" />
      </Pointers>
      <Note $x={1481} $y={1165}>
        {"1. Добавлена\nвозможность рисовать\nполилинии на карте\n2. Улучшена отрисовка\nполигонов"}
      </Note>
      <Note $x={241} $y={1249}>
        {"3. Доработан экспорт полилиний\nсовместно с полигонами и\nкоординатами точек в формат\nKML"}
      </Note>
      <Note $x={309} $y={463}>
        {"4. Обновлены окна выбора\nисходной/целевой систем\nкоординат"}
      </Note>
      <Note $x={931} $y={451}>
        {'5. Обновлен диалог "Мои системы"'}
      </Note>
    </Page>
  );
}
